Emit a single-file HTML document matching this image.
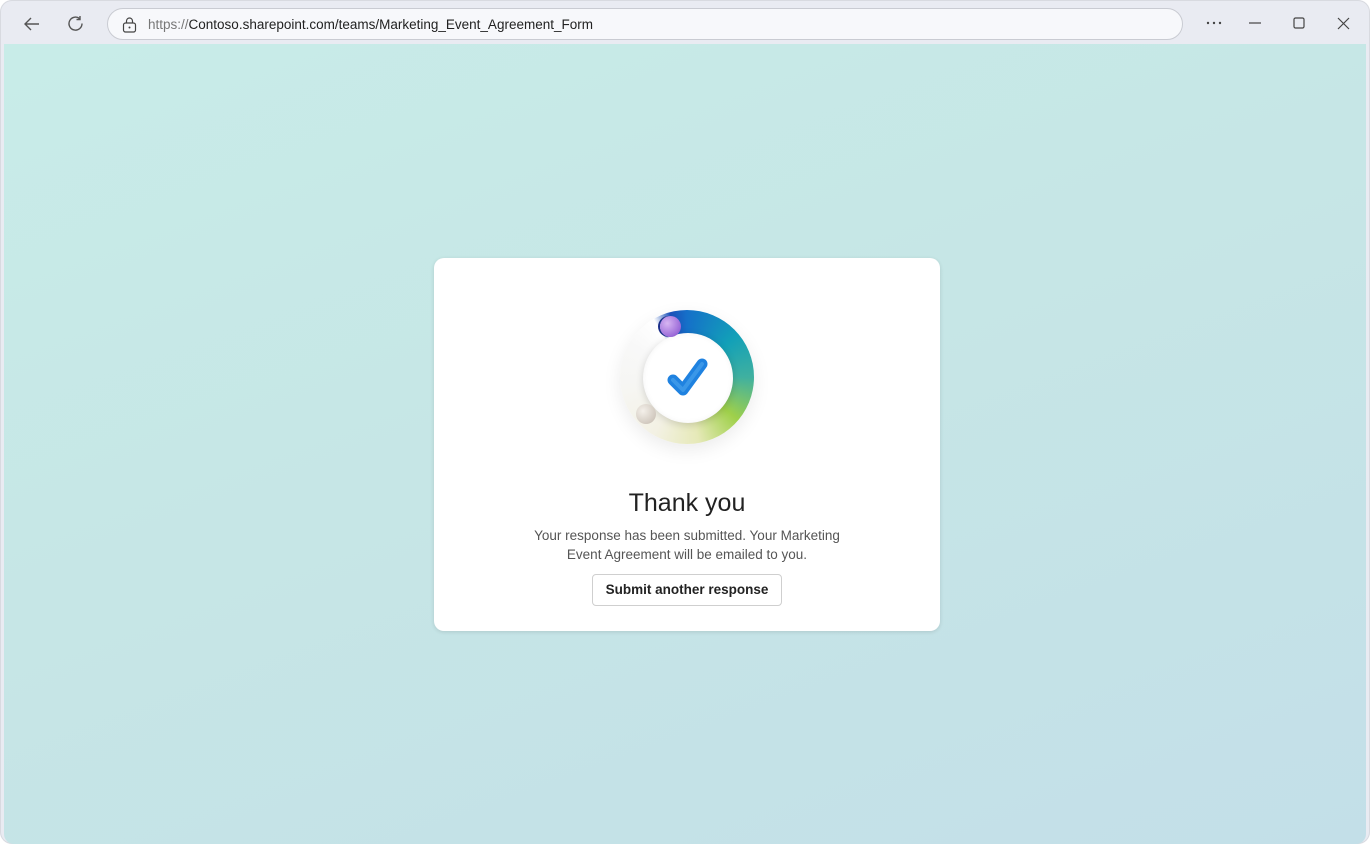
<!DOCTYPE html>
<html><head><meta charset="utf-8"><style>
*{margin:0;padding:0;box-sizing:border-box}
html,body{width:1370px;height:844px;overflow:hidden;background:#fff}
body{font-family:"Liberation Sans",sans-serif}
.win{position:absolute;left:0;top:0;width:1370px;height:844px;border-radius:12px;background:#e9ebf2;overflow:hidden;box-shadow:inset 0 0 0 1px #d8dae0}
.content{position:absolute;left:4px;top:44px;width:1362px;height:800px;background:linear-gradient(160deg,#c8ece8 0%,#c6e6e6 45%,#c3dfe8 100%);border-bottom-left-radius:10px;border-bottom-right-radius:10px}
.url{position:absolute;left:107px;top:8px;width:1076px;height:32px;border:1px solid #c9cbd2;border-radius:16px;background:#f7f8fb}
.url span{position:absolute;left:40px;top:8px;font-size:13.5px;color:#222;letter-spacing:0}
.url span i{font-style:normal;color:#777}
.card{position:absolute;left:434px;top:258px;width:506px;height:373px;background:#fff;border-radius:10px;box-shadow:0 1px 4px rgba(0,0,0,.12)}
.ring{position:absolute;left:620px;top:310px;width:134px;height:134px;border-radius:50%;
background:conic-gradient(from 0deg,#1570c9 0deg,#12a0b8 50deg,#3fb0a0 90deg,#9fd04a 130deg,#e6e9b8 170deg,#f3f1e4 210deg,#f6f6f3 260deg,#f8f8f8 300deg,#fff 330deg,#1a4fb8 345deg,#1570c9 360deg);
box-shadow:0 6px 18px rgba(0,0,0,.08)}
.inner{position:absolute;left:643px;top:333px;width:90px;height:90px;border-radius:50%;background:#fff;box-shadow:0 2px 8px rgba(0,0,0,.15), inset 0 0 6px rgba(0,0,0,.05)}
.ball1{position:absolute;left:660px;top:316px;width:21px;height:21px;border-radius:50%;background:radial-gradient(circle at 35% 35%,#d7b5f2,#9b6ad8 70%,#6a3fb0);box-shadow:-2px 0 0 #1c2f8a}
.ball2{position:absolute;left:636px;top:404px;width:20px;height:20px;border-radius:50%;background:radial-gradient(circle at 35% 35%,#f4f0ea,#d2cac0 70%,#b9afa3)}
h1{position:absolute;left:434px;width:506px;top:489px;text-align:center;font-weight:400;font-size:25px;color:#222}
p{position:absolute;left:434px;width:506px;top:526px;text-align:center;font-size:13.5px;line-height:19px;color:#555}
.btn{position:absolute;left:592px;top:574px;width:190px;height:32px;border:1px solid #cfcfcf;border-radius:4px;text-align:center;font-size:13.5px;font-weight:700;line-height:30px;color:#222;background:#fff}
</style></head><body>
<div class="win">
<svg style="position:absolute;left:22px;top:14px" width="20" height="20" viewBox="0 0 20 20"><path d="M17 10H3M9 4L3 10l6 6" stroke="#555" stroke-width="1.4" fill="none"/></svg>
<svg style="position:absolute;left:66px;top:14px" width="20" height="20" viewBox="0 0 20 20"><path d="M16 9.5A6.5 6.5 0 1 1 13.5 4.5M14 2v3.5h-3.5" stroke="#555" stroke-width="1.4" fill="none"/></svg>
<div class="url">
<svg style="position:absolute;left:14px;top:8px" width="15" height="16" viewBox="0 0 15 16"><rect x="1.5" y="6" width="12" height="9" rx="2" stroke="#444" stroke-width="1.2" fill="none"/><path d="M4.5 6V4a3 3 0 0 1 6 0v2" stroke="#444" stroke-width="1.2" fill="none"/><circle cx="7.5" cy="10.5" r="1" fill="#444"/></svg>
<span><i>https://</i>Contoso.sharepoint.com/teams/Marketing_Event_Agreement_Form</span></div>
<svg style="position:absolute;left:1206px;top:18px" width="16" height="8"><circle cx="2" cy="5" r="1.2" fill="#444"/><circle cx="8" cy="5" r="1.2" fill="#444"/><circle cx="14" cy="5" r="1.2" fill="#444"/></svg>
<svg style="position:absolute;left:1248px;top:14px" width="14" height="14"><path d="M1 9h12" stroke="#444" stroke-width="1.2"/></svg>
<svg style="position:absolute;left:1293px;top:17px" width="14" height="14"><rect x="1" y="1" width="10" height="10" rx="1.5" stroke="#444" stroke-width="1.2" fill="none"/></svg>
<svg style="position:absolute;left:1337px;top:17px" width="14" height="14"><path d="M1 1l11 11M12 1L1 12" stroke="#444" stroke-width="1.2"/></svg>
<div class="content"></div>
</div>
<div class="card"></div>
<div class="ring"></div>
<div class="inner"></div>
<svg style="position:absolute;left:664px;top:355px" width="48" height="46" viewBox="0 0 48 46"><path d="M9 25l10 10L38 9" stroke="#1f82e0" stroke-width="11" stroke-linecap="round" stroke-linejoin="round" fill="none"/><path d="M9 25l10 10L38 9" stroke="#56acf0" stroke-width="4" stroke-linecap="round" stroke-linejoin="round" fill="none" opacity=".5"/></svg>
<div class="ball1"></div>
<div class="ball2"></div>
<h1>Thank you</h1>
<p>Your response has been submitted. Your Marketing<br>Event Agreement will be emailed to you.</p>
<div class="btn">Submit another response</div>
</body></html>
